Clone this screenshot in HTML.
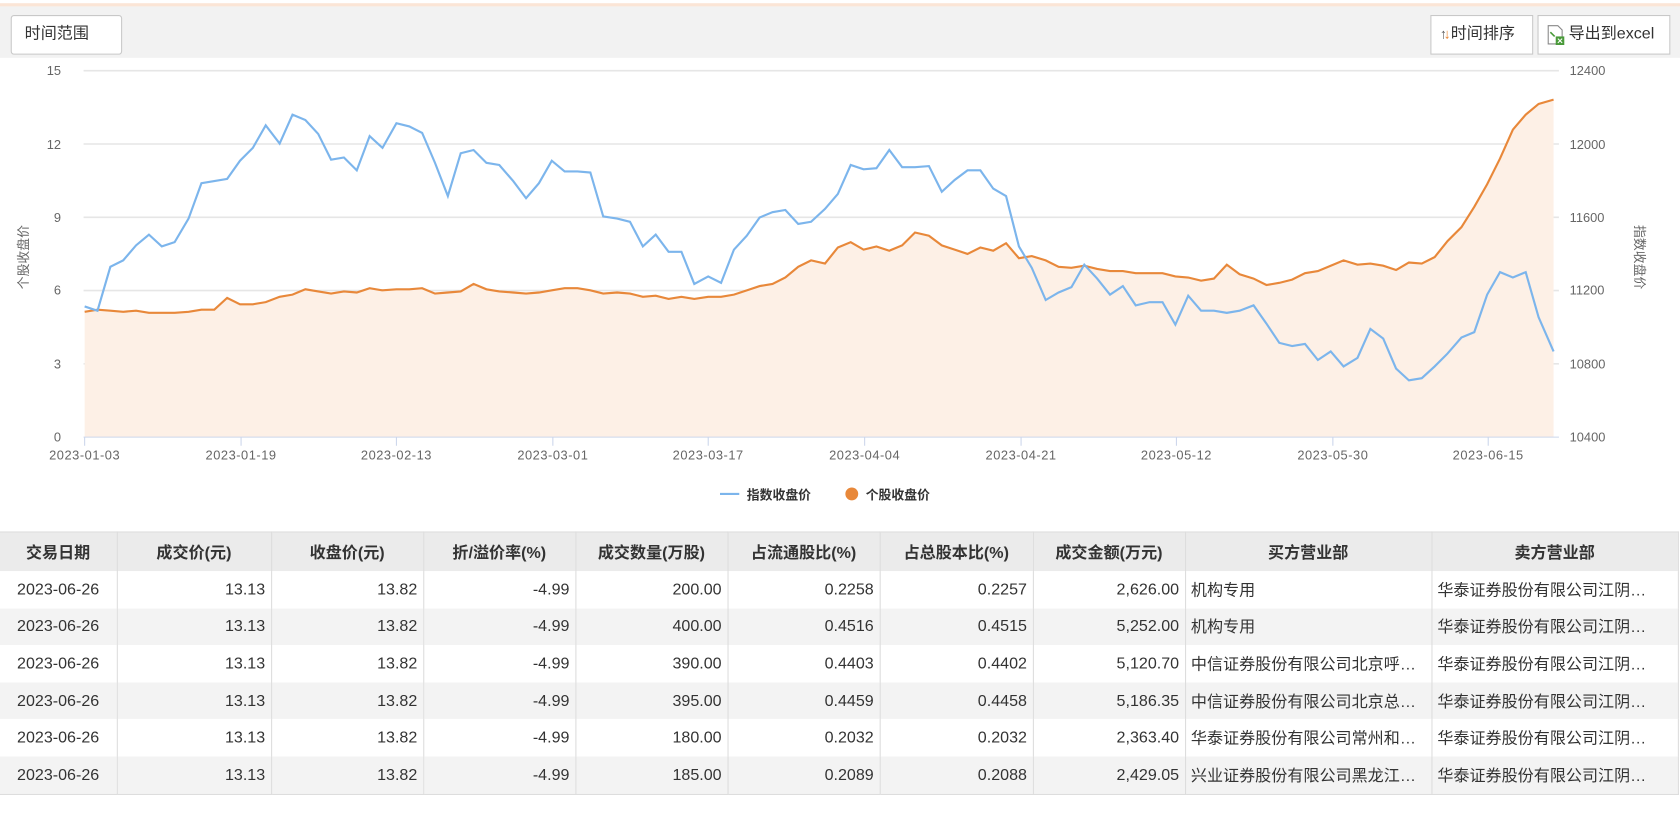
<!DOCTYPE html>
<html><head><meta charset="utf-8"><style>
html,body{margin:0;padding:0;background:#fff;overflow:hidden;width:1680px;height:816px}
#w{position:absolute;left:0;top:0;width:1568px;height:762px;transform:scale(1.07143);transform-origin:0 0;font-family:"Liberation Sans","Noto Sans CJK SC",sans-serif;color:#333}
.strip{position:absolute;left:0;top:3px;width:1568px;height:3px;background:#fbe5d6}
.bar{position:absolute;left:0;top:6px;width:1568px;height:48px;background:#f2f2f2}
.btn{position:absolute;background:#fff;border:1px solid #c8c8c8;font-size:15px;line-height:34px;box-sizing:border-box;height:37px;color:#333}
table{position:absolute;left:0;top:496px;width:1566px;border-collapse:collapse;font-size:15px;table-layout:fixed}
th{background:#ebebeb;height:34px;font-weight:bold;border-right:1px solid #ddd;border-top:1px solid #ddd;color:#333}
td{height:34.6px;border-right:1px solid #ddd;padding:0 5px;white-space:nowrap;overflow:hidden;text-overflow:ellipsis}
tr:nth-child(even) td{background:#f3f3f3}
td.r{text-align:right}td.c{text-align:center}
tbody tr:last-child td{border-bottom:1px solid #ddd}
</style></head><body><div id="w">
<div class="strip"></div><div class="bar"></div>
<div class="btn" style="left:10px;top:14px;width:104px;padding-left:12px;border-radius:3px">时间范围</div>
<div class="btn" style="left:1335px;top:14px;width:96px;padding-left:8px"><span style="font-size:13px;color:#555">↑</span><span style="font-size:13px;color:#e8832f;margin-left:-3px">↓</span>时间排序</div>
<div class="btn" style="left:1435px;top:14px;width:124px;padding-left:28px">
<svg style="position:absolute;left:8px;top:8px" width="18" height="20" viewBox="0 0 18 20"><path d="M1 1h9l4 4v13H1z" fill="#fff" stroke="#888"/><rect x="8" y="11" width="8" height="8" fill="#4a9a3a"/><path d="M10 13l4 4M14 13l-4 4" stroke="#fff"/><path d="M3 7l4 4" stroke="#4a9a3a" stroke-width="1.5"/></svg>导出到excel</div>
<svg style="position:absolute;left:0;top:54px" width="1568" height="420" viewBox="0 54 1568 420" font-family="Liberation Sans, Noto Sans CJK SC, sans-serif">
<g stroke="#e6e6e6" stroke-width="1.5"><line x1="78" x2="1455" y1="66" y2="66"/><line x1="78" x2="1455" y1="134.4" y2="134.4"/><line x1="78" x2="1455" y1="202.8" y2="202.8"/><line x1="78" x2="1455" y1="271.2" y2="271.2"/><line x1="78" x2="1455" y1="339.6" y2="339.6"/></g>
<g font-size="12" fill="#666" text-anchor="end"><text x="57" y="70">15</text><text x="57" y="139">12</text><text x="57" y="207">9</text><text x="57" y="275">6</text><text x="57" y="344">3</text><text x="57" y="412">0</text></g>
<g font-size="12" fill="#666"><text x="1465" y="70">12400</text><text x="1465" y="139">12000</text><text x="1465" y="207">11600</text><text x="1465" y="275">11200</text><text x="1465" y="344">10800</text><text x="1465" y="412">10400</text></g>
<text font-size="12" fill="#666" transform="translate(26,240) rotate(-90)" text-anchor="middle">个股收盘价</text>
<text font-size="12" fill="#666" transform="translate(1526,240) rotate(90)" text-anchor="middle">指数收盘价</text>
<path fill="#fdf0e6" d="M79,408 L79,291 91,289 103,290 115,291 127,290 139,292 151,292 163,292 176,291 188,289 200,289 212,278 224,284 236,284 248,282 261,277 273,275 285,270 297,272 309,274 321,272 333,273 345,269 357,271 370,270 382,270 394,269 406,274 418,273 430,272 442,265 454,270 466,272 479,273 491,274 503,273 515,271 527,269 539,269 551,271 563,274 576,273 588,274 600,277 612,276 624,279 636,277 648,279 661,277 673,277 685,275 697,271 709,267 721,265 733,259 745,249 757,243 770,246 782,231 794,226 806,233 818,230 830,234 842,229 854,217 867,220 879,229 891,233 903,237 915,231 927,234 939,227 951,241 963,239 976,243 988,249 1000,250 1012,248 1024,251 1036,253 1048,253 1060,255 1073,255 1085,255 1097,258 1109,259 1121,262 1133,260 1145,247 1157,256 1170,260 1182,266 1194,264 1206,261 1218,255 1230,253 1242,248 1254,243 1267,247 1279,246 1291,248 1303,252 1315,245 1327,246 1339,240 1351,225 1364,212 1376,193 1388,172 1400,148 1412,121 1424,107 1436,97 1450,93 L1450,408Z"/>
<line x1="78" x2="1455" y1="408" y2="408" stroke="#ccd6eb"/>
<g stroke="#ccd6eb"><line x1="79" x2="79" y1="408" y2="416"/><line x1="225" x2="225" y1="408" y2="416"/><line x1="370" x2="370" y1="408" y2="416"/><line x1="516" x2="516" y1="408" y2="416"/><line x1="661" x2="661" y1="408" y2="416"/><line x1="807" x2="807" y1="408" y2="416"/><line x1="953" x2="953" y1="408" y2="416"/><line x1="1098" x2="1098" y1="408" y2="416"/><line x1="1244" x2="1244" y1="408" y2="416"/><line x1="1389" x2="1389" y1="408" y2="416"/></g>
<g font-size="12" fill="#666" text-anchor="middle" letter-spacing="0.5"><text x="79" y="429">2023-01-03</text><text x="225" y="429">2023-01-19</text><text x="370" y="429">2023-02-13</text><text x="516" y="429">2023-03-01</text><text x="661" y="429">2023-03-17</text><text x="807" y="429">2023-04-04</text><text x="953" y="429">2023-04-21</text><text x="1098" y="429">2023-05-12</text><text x="1244" y="429">2023-05-30</text><text x="1389" y="429">2023-06-15</text></g>
<polyline fill="none" stroke="#e8883a" stroke-width="2" points="79,291 91,289 103,290 115,291 127,290 139,292 151,292 163,292 176,291 188,289 200,289 212,278 224,284 236,284 248,282 261,277 273,275 285,270 297,272 309,274 321,272 333,273 345,269 357,271 370,270 382,270 394,269 406,274 418,273 430,272 442,265 454,270 466,272 479,273 491,274 503,273 515,271 527,269 539,269 551,271 563,274 576,273 588,274 600,277 612,276 624,279 636,277 648,279 661,277 673,277 685,275 697,271 709,267 721,265 733,259 745,249 757,243 770,246 782,231 794,226 806,233 818,230 830,234 842,229 854,217 867,220 879,229 891,233 903,237 915,231 927,234 939,227 951,241 963,239 976,243 988,249 1000,250 1012,248 1024,251 1036,253 1048,253 1060,255 1073,255 1085,255 1097,258 1109,259 1121,262 1133,260 1145,247 1157,256 1170,260 1182,266 1194,264 1206,261 1218,255 1230,253 1242,248 1254,243 1267,247 1279,246 1291,248 1303,252 1315,245 1327,246 1339,240 1351,225 1364,212 1376,193 1388,172 1400,148 1412,121 1424,107 1436,97 1450,93"/>
<polyline fill="none" stroke="#7cb5ec" stroke-width="2" points="79,286 91,290 103,249 115,243 127,229 139,219 151,230 163,226 176,204 188,171 200,169 212,167 224,150 236,138 248,117 261,134 273,107 285,112 297,125 309,149 321,147 333,159 345,127 357,138 370,115 382,118 394,124 406,152 418,183 430,143 442,140 454,152 466,154 479,169 491,185 503,171 515,150 527,160 539,160 551,161 563,202 576,204 588,207 600,230 612,219 624,235 636,235 648,265 661,258 673,264 685,233 697,220 709,203 721,198 733,196 745,209 757,207 770,195 782,181 794,154 806,158 818,157 830,140 842,156 854,156 867,155 879,179 891,168 903,159 915,159 927,176 939,183 951,230 963,250 976,280 988,273 1000,268 1012,247 1024,260 1036,275 1048,267 1060,285 1073,282 1085,282 1097,303 1109,276 1121,290 1133,290 1145,292 1157,290 1170,285 1182,302 1194,320 1206,323 1218,321 1230,336 1242,328 1254,342 1267,334 1279,307 1291,316 1303,344 1315,355 1327,353 1339,342 1351,330 1364,315 1376,310 1388,275 1400,254 1412,259 1424,254 1436,296 1450,328"/>
<line x1="672" x2="690" y1="461" y2="461" stroke="#7cb5ec" stroke-width="2"/>
<text x="697" y="466" font-size="12" font-weight="bold" fill="#333">指数收盘价</text>
<circle cx="795" cy="461" r="6" fill="#e8883a"/>
<text x="808" y="466" font-size="12" font-weight="bold" fill="#333">个股收盘价</text>
</svg>
<table>
<colgroup><col style="width:109px"><col style="width:144px"><col style="width:142px"><col style="width:142px"><col style="width:142px"><col style="width:142px"><col style="width:143px"><col style="width:142px"><col style="width:230px"><col style="width:230px"></colgroup>
<thead><tr><th>交易日期</th><th>成交价(元)</th><th>收盘价(元)</th><th>折/溢价率(%)</th><th>成交数量(万股)</th><th>占流通股比(%)</th><th>占总股本比(%)</th><th>成交金额(万元)</th><th>买方营业部</th><th>卖方营业部</th></tr></thead>
<tbody>
<tr><td class="c">2023-06-26</td><td class="r">13.13</td><td class="r">13.82</td><td class="r">-4.99</td><td class="r">200.00</td><td class="r">0.2258</td><td class="r">0.2257</td><td class="r">2,626.00</td><td>机构专用</td><td>华泰证券股份有限公司江阴…</td></tr>
<tr><td class="c">2023-06-26</td><td class="r">13.13</td><td class="r">13.82</td><td class="r">-4.99</td><td class="r">400.00</td><td class="r">0.4516</td><td class="r">0.4515</td><td class="r">5,252.00</td><td>机构专用</td><td>华泰证券股份有限公司江阴…</td></tr>
<tr><td class="c">2023-06-26</td><td class="r">13.13</td><td class="r">13.82</td><td class="r">-4.99</td><td class="r">390.00</td><td class="r">0.4403</td><td class="r">0.4402</td><td class="r">5,120.70</td><td>中信证券股份有限公司北京呼…</td><td>华泰证券股份有限公司江阴…</td></tr>
<tr><td class="c">2023-06-26</td><td class="r">13.13</td><td class="r">13.82</td><td class="r">-4.99</td><td class="r">395.00</td><td class="r">0.4459</td><td class="r">0.4458</td><td class="r">5,186.35</td><td>中信证券股份有限公司北京总…</td><td>华泰证券股份有限公司江阴…</td></tr>
<tr><td class="c">2023-06-26</td><td class="r">13.13</td><td class="r">13.82</td><td class="r">-4.99</td><td class="r">180.00</td><td class="r">0.2032</td><td class="r">0.2032</td><td class="r">2,363.40</td><td>华泰证券股份有限公司常州和…</td><td>华泰证券股份有限公司江阴…</td></tr>
<tr><td class="c">2023-06-26</td><td class="r">13.13</td><td class="r">13.82</td><td class="r">-4.99</td><td class="r">185.00</td><td class="r">0.2089</td><td class="r">0.2088</td><td class="r">2,429.05</td><td>兴业证券股份有限公司黑龙江…</td><td>华泰证券股份有限公司江阴…</td></tr>
</tbody></table>
</div></body></html>
